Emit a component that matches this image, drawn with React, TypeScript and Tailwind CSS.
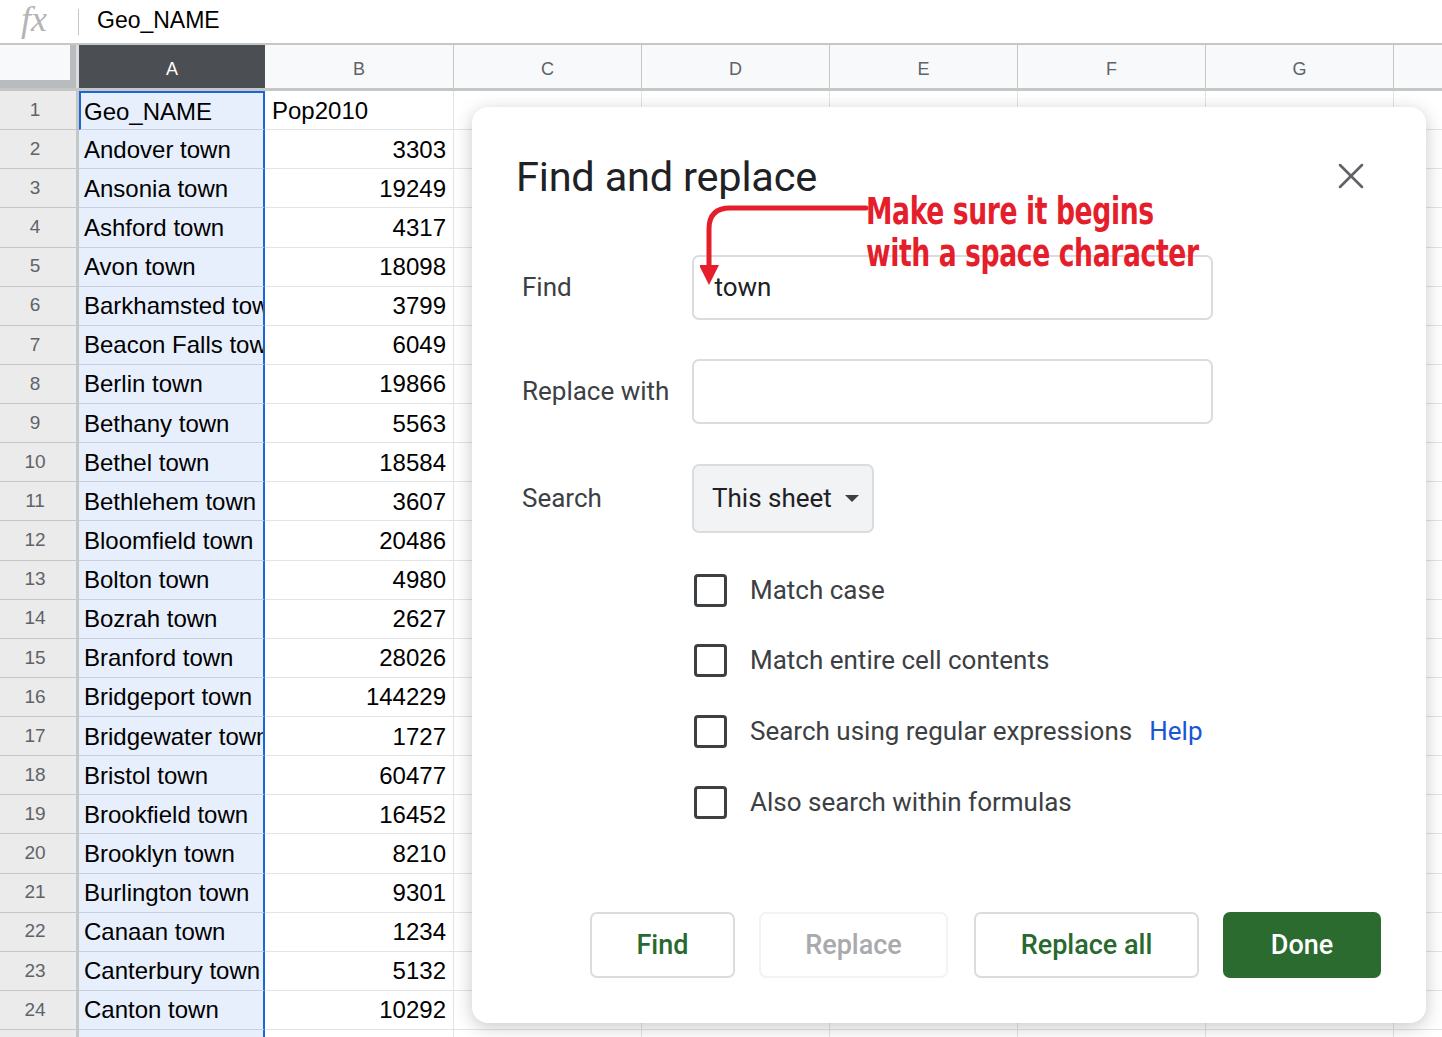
import { X } from 'lucide-react';

const rows: [string, string][] = [
  ['Geo_NAME', 'Pop2010'],
  ['Andover town', '3303'],
  ['Ansonia town', '19249'],
  ['Ashford town', '4317'],
  ['Avon town', '18098'],
  ['Barkhamsted town', '3799'],
  ['Beacon Falls town', '6049'],
  ['Berlin town', '19866'],
  ['Bethany town', '5563'],
  ['Bethel town', '18584'],
  ['Bethlehem town', '3607'],
  ['Bloomfield town', '20486'],
  ['Bolton town', '4980'],
  ['Bozrah town', '2627'],
  ['Branford town', '28026'],
  ['Bridgeport town', '144229'],
  ['Bridgewater town', '1727'],
  ['Bristol town', '60477'],
  ['Brookfield town', '16452'],
  ['Brooklyn town', '8210'],
  ['Burlington town', '9301'],
  ['Canaan town', '1234'],
  ['Canterbury town', '5132'],
  ['Canton town', '10292'],
  ['Chaplin town', '2305'],
];

const cols = ['C', 'D', 'E', 'F', 'G'];

function Checkbox({ label, help }: { label: string; help?: boolean }) {
  return (
    <div className="flex items-center h-[70.6px]">
      <div className="w-[33px] h-[33px] ml-[2px] border-[3px] border-[#3c4043] rounded-[4px]" />
      <span className="ml-[23px] text-[26px] text-[#3c4043]">{label}</span>
      {help && <span className="ml-[17px] text-[26px] text-[#1a55d6]">Help</span>}
    </div>
  );
}

function Dialog() {
  return (
    <div
      className="absolute left-[472px] top-[107px] w-[954px] h-[916px] bg-white rounded-[16px] shadow-[0_4px_18px_rgba(0,0,0,0.22)] px-[45px] pt-[148px] text-[#202124]"
      style={{ fontFamily: 'Roboto, "Open Sans", sans-serif' }}
    >
      {/* Header */}
      <div className="absolute left-[44px] top-[46px] text-[41.5px] leading-[48px] text-[#202124] tracking-[-0.2px]">
        Find and replace
      </div>
      <X className="absolute right-[53px] top-[47px] text-[#5f6368]" size={44} strokeWidth={1.4} />

      {/* Annotation */}
      <svg className="absolute left-[228px] top-[96px]" width="170" height="90" viewBox="0 0 170 90">
        <path d="M166 5 H30 Q9 5 9 26 V66" fill="none" stroke="#e41e2b" strokeWidth="5" strokeLinecap="round" />
        <polygon points="-1,62 19,62 9,82" fill="#e41e2b" />
      </svg>
      <div
        className="absolute left-[394px] top-[84px] origin-left scale-x-[0.8] whitespace-nowrap text-[#e41e2b] text-[37px] leading-[42px] font-bold tracking-[-0.5px]"
        style={{ fontFamily: '"DejaVu Sans Condensed", "Liberation Sans Narrow", sans-serif' }}
      >
        <div>Make sure it begins</div>
        <div>with a space character</div>
      </div>

      {/* Form */}
      <div className="flex items-center h-[65px]">
        <div className="w-[175px] pl-[5px] text-[26px] text-[#3c4043]">Find</div>
        <div className="w-[521px] h-[65px] border-2 border-[#dadce0] rounded-[7px] flex items-center pl-[14px] text-[26px] text-[#202124]">
          &nbsp;town
        </div>
      </div>
      <div className="flex items-center h-[65px] mt-[39px]">
        <div className="w-[175px] pl-[5px] text-[26px] text-[#3c4043]">Replace with</div>
        <div className="w-[521px] h-[65px] border-2 border-[#dadce0] rounded-[7px]" />
      </div>
      <div className="flex items-center h-[69px] mt-[40px]">
        <div className="w-[175px] pl-[5px] text-[26px] text-[#3c4043]">Search</div>
        <div className="w-[182px] h-[69px] bg-[#f1f3f4] border-2 border-[#dadce0] rounded-[7px] flex items-center pl-[18px] text-[26px] text-[#202124]">
          This sheet
          <svg className="ml-[13px]" width="14" height="8" viewBox="0 0 14 8">
            <polygon points="0,0 14,0 7,7" fill="#3c4043" />
          </svg>
        </div>
      </div>

      <div className="ml-[175px] mt-[22px]">
        <Checkbox label="Match case" />
        <Checkbox label="Match entire cell contents" />
        <Checkbox label="Search using regular expressions" help />
        <Checkbox label="Also search within formulas" />
      </div>

      {/* Buttons */}
      <div className="absolute right-[45px] bottom-[45px] flex text-[27px] font-medium">
        <button className="w-[145px] h-[66px] border-2 border-[#dadce0] rounded-[7px] text-[#28692f] bg-white">Find</button>
        <button className="ml-[24px] w-[189px] h-[66px] border-2 border-[#f1f3f4] rounded-[7px] text-[#a8aaad] bg-white">Replace</button>
        <button className="ml-[26px] w-[225px] h-[66px] border-2 border-[#dadce0] rounded-[7px] text-[#28692f] bg-white">Replace all</button>
        <button className="ml-[24px] w-[158px] h-[66px] rounded-[7px] text-white bg-[#2b6b2f]">Done</button>
      </div>
    </div>
  );
}

export default function App() {
  return (
    <div
      className="relative w-[1442px] h-[1037px] overflow-hidden bg-white text-black"
      style={{ fontFamily: '"Liberation Sans", Arial, sans-serif' }}
    >
      {/* Formula bar */}
      <div className="flex items-center h-[45px] border-b-2 border-[#c4c7c5]">
        <div className="w-[78px] flex items-center justify-center">
          <span
            className="italic text-[36px] text-[#b4b4b4] -mt-[6px] -ml-[10px]"
            style={{ fontFamily: '"Liberation Serif", serif' }}
          >
            fx
          </span>
        </div>
        <div className="w-px h-[26px] bg-[#c4c7c5]" />
        <div className="ml-[18px] text-[23px] -mt-[2px]">Geo_NAME</div>
      </div>

      {/* Column headers */}
      <div className="flex h-[46px] bg-[#f8f9fa] border-b-[3px] border-[#c4c7c5] text-[18px] text-[#5f6368]">
        <div className="w-[79px] h-full border-r-[3px] border-[#dadce0]">
          <div className="w-[76px] h-[43px] bg-[#f8f9fa] border-r-[6px] border-b-[8px] border-[#b9bcbe]" />
        </div>
        <div className="w-[186px] bg-[#4b4e53] text-white flex items-center justify-center pt-[5px]">A</div>
        <div className="w-[189px] border-r border-[#c4c7c5] flex items-center justify-center pt-[5px]">B</div>
        {cols.map((c) => (
          <div key={c} className="w-[188px] border-r border-[#c4c7c5] flex items-center justify-center pt-[5px]">
            {c}
          </div>
        ))}
        <div className="flex-1" />
      </div>

      {/* Grid */}
      <div>
        {rows.map(([name, pop], i) => (
          <div key={i} className="flex h-[39.13px]">
            <div className="w-[79px] bg-[#ebebeb] border-r-[3px] border-[#c4c7c5] border-b border-b-[#c4c7c5] flex items-center justify-center pr-[6px] text-[19px] text-[#5f6368]">
              {i + 1}
            </div>
            <div
              className={`w-[186px] bg-[#e8effc] border-r-2 border-r-[#1a66d9] border-b border-b-[#c7cfde] flex items-center overflow-hidden whitespace-nowrap text-[24px] ${
                i === 0 ? 'border-2 border-[#1a66d9] pl-[3px] pt-[2px]' : 'pl-[5px] pt-[1px]'
              }`}
            >
              {name}
            </div>
            <div
              className={`w-[189px] border-r border-b border-[#e2e3e3] flex items-center text-[24px] px-[7px] pt-[1px] ${
                i === 0 ? 'justify-start' : 'justify-end'
              }`}
            >
              {pop}
            </div>
            {cols.map((c) => (
              <div key={c} className="w-[188px] border-r border-b border-[#e2e3e3]" />
            ))}
            <div className="flex-1 border-b border-[#e2e3e3]" />
          </div>
        ))}
      </div>

      <Dialog />
    </div>
  );
}
